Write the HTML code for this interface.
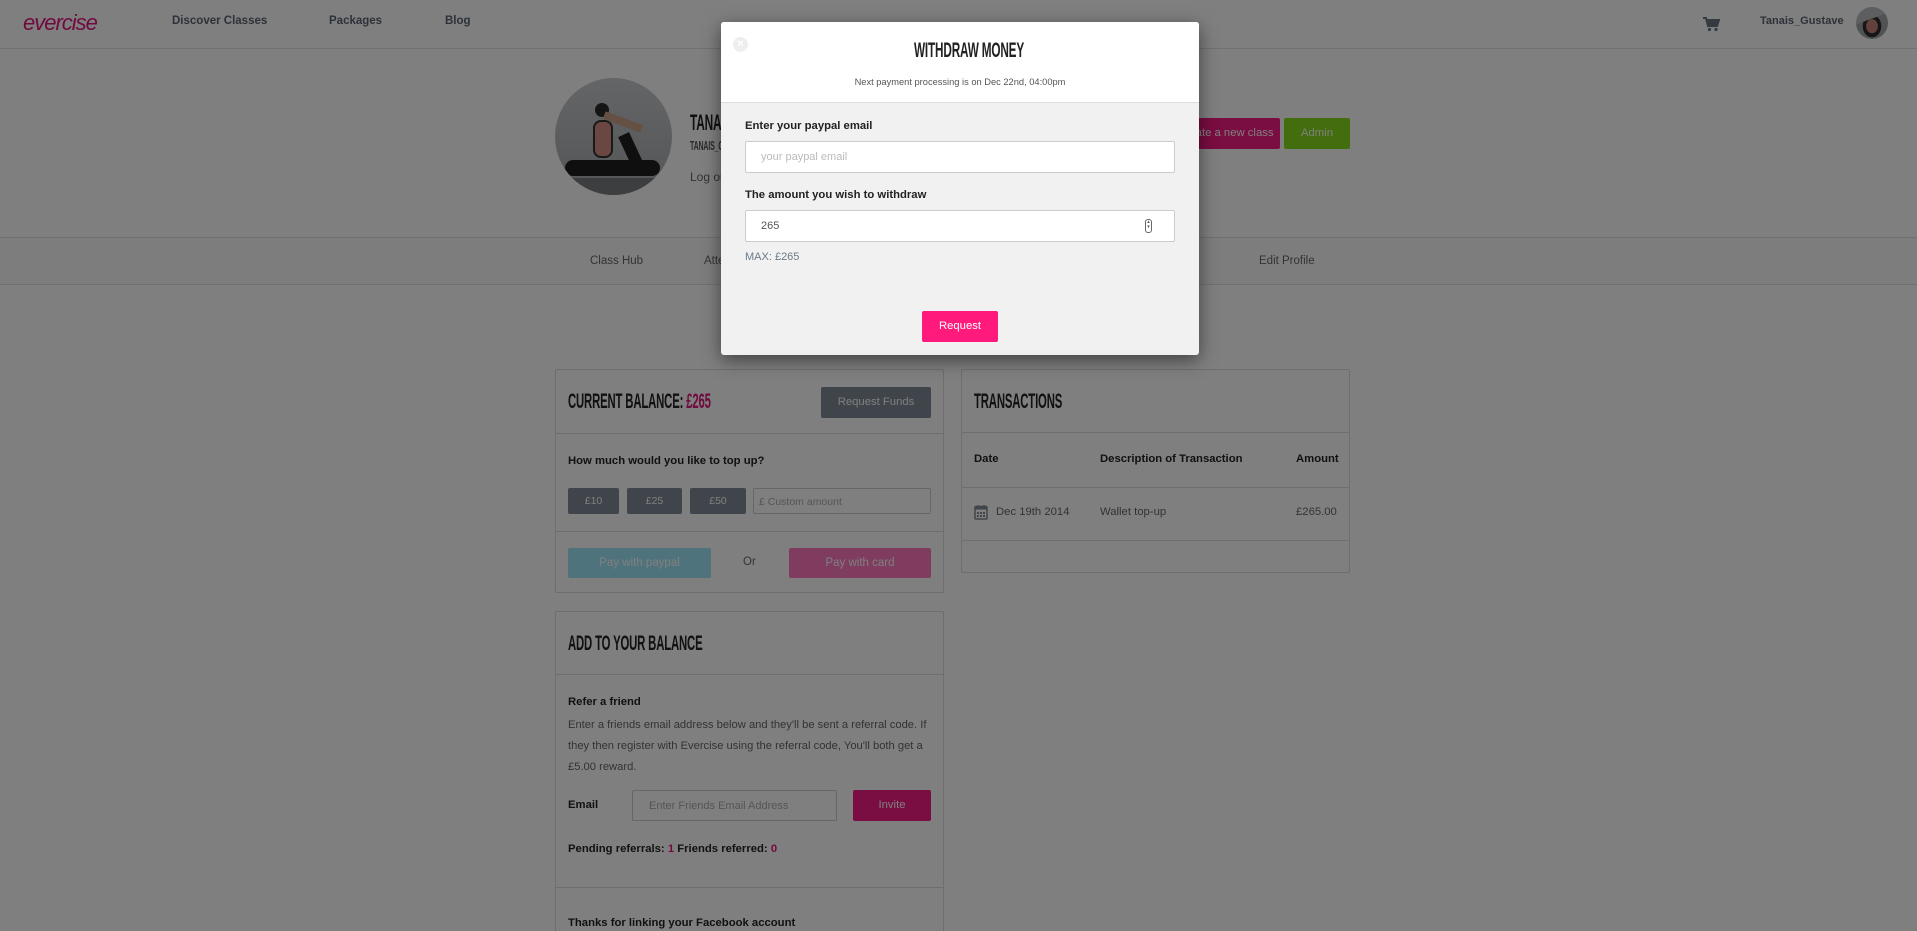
<!DOCTYPE html>
<html><head><meta charset="utf-8"><style>
*{box-sizing:border-box;margin:0;padding:0}
html,body{width:1917px;height:931px;overflow:hidden}
body{background:#fff;font-family:"Liberation Sans",sans-serif;color:#333;position:relative;font-size:11.3px}
.a{position:absolute;white-space:nowrap}
.cond{font-weight:bold;transform:scaleX(.54);transform-origin:0 50%;letter-spacing:-.3px;color:#222}
.panel{position:absolute;background:#fff;border:1px solid #ddd;border-radius:2px;overflow:hidden}
.hr{position:absolute;left:0;right:0;height:1px;background:#ddd}
.btn{position:absolute;color:#fff;text-align:center;border-radius:2px;font-size:11.3px}
.dark{background:#7f8a95}
.lbl{font-weight:bold;font-size:11.3px;color:#222}
.grey{color:#666}
#ov{position:absolute;left:0;top:0;width:1917px;height:931px;background:rgba(0,0,0,.5)}
</style></head><body>
<!-- header -->
<div class="a" style="left:23px;top:10px;font-size:22px;font-style:italic;color:#e0157f;letter-spacing:-1px">evercise</div>
<div class="a lbl" style="left:172px;top:15px;color:#5a6470;font-size:11.5px">Discover Classes</div>
<div class="a lbl" style="left:329px;top:15px;color:#5a6470;font-size:11.5px">Packages</div>
<div class="a lbl" style="left:445px;top:15px;color:#5a6470;font-size:11.5px">Blog</div>
<svg class="a" style="left:1703px;top:17px" width="18" height="15" viewBox="0 0 18 15"><path d="M0 1h3l2 8h9l2-6H4" fill="none" stroke="#68747f" stroke-width="2"/><rect x="5" y="4" width="10" height="5" fill="#68747f"/><circle cx="6.5" cy="12.5" r="1.6" fill="#68747f"/><circle cx="13" cy="12.5" r="1.6" fill="#68747f"/></svg>
<div class="a lbl" style="left:1760px;top:15px;color:#5a6470;font-size:11px">Tanais_Gustave</div>
<div class="a" style="left:1856px;top:7px;width:32px;height:32px;border-radius:50%;background:linear-gradient(160deg,#b8bcc0 0 40%,transparent 40%),radial-gradient(ellipse at 50% 60%,#c98377 0 25%,#2c2c2c 27% 40%,#a0a5a9 42%)"></div>
<div class="hr" style="top:48px;background:#e3e3e3"></div>
<!-- profile -->
<div class="a" style="left:555px;top:78px;width:117px;height:117px;border-radius:50%;overflow:hidden;background:linear-gradient(#c8cbce,#a6abaf)">
 <div class="a" style="left:40px;top:25px;width:14px;height:14px;border-radius:50%;background:#2a2a2a"></div>
 <div class="a" style="left:38px;top:42px;width:20px;height:38px;border-radius:8px;background:#d48e83;border:2px solid #333"></div>
 <div class="a" style="left:48px;top:40px;width:40px;height:8px;background:#caa088;transform:rotate(20deg)"></div>
 <div class="a" style="left:10px;top:82px;width:95px;height:16px;border-radius:8px;background:#1e1e1e"></div>
 <div class="a" style="left:70px;top:55px;width:12px;height:35px;background:#1e1e1e;transform:rotate(-25deg)"></div>
 <div class="a" style="left:0;top:100px;width:117px;height:17px;background:#7a7d80"></div>
</div>
<div class="a cond" style="left:690px;top:110px;font-size:22px">TANAIS</div>
<div class="a cond" style="left:690px;top:138px;font-size:13px;color:#555">TANAIS_GUSTAVE</div>
<div class="a grey" style="left:690px;top:170px;font-size:12px">Log out</div>
<div class="btn" style="left:1171px;top:118px;width:109px;height:31px;line-height:31px;background:#f51a82">Create a new class</div>
<div class="btn" style="left:1284px;top:118px;width:66px;height:31px;line-height:31px;background:#86dc1c">Admin</div>
<div class="a" style="left:0;top:237px;width:1917px;height:48px;background:#fbfbfb;border-top:1px solid #e0e0e0;border-bottom:1px solid #e0e0e0"></div>
<div class="a grey" style="left:590px;top:255px;font-size:11.5px">Class Hub</div>
<div class="a grey" style="left:704px;top:255px;font-size:11.5px">Attendees</div>
<div class="a grey" style="left:1259px;top:255px;font-size:11.5px">Edit Profile</div>
<!-- left panel -->
<div class="panel" style="left:555px;top:369px;width:389px;height:224px">
 <div class="a cond" style="left:12px;top:20px;font-size:21px">CURRENT BALANCE: <span style="color:#e0157f">£265</span></div>
 <div class="btn dark" style="left:265px;top:17px;width:110px;height:31px;line-height:31px">Request Funds</div>
 <div class="hr" style="top:63px"></div>
 <div class="a lbl" style="left:12px;top:85px">How much would you like to top up?</div>
 <div class="btn dark" style="left:12px;top:118px;width:51px;height:26px;line-height:26px;font-size:10.5px">£10</div>
 <div class="btn dark" style="left:71px;top:118px;width:55px;height:26px;line-height:26px;font-size:10.5px">£25</div>
 <div class="btn dark" style="left:134px;top:118px;width:56px;height:26px;line-height:26px;font-size:10.5px">£50</div>
 <div class="a" style="left:197px;top:118px;width:178px;height:26px;border:1px solid #ccc;border-radius:2px;color:#aaa;font-size:10.5px;padding:7px 5px">£ Custom amount</div>
 <div class="hr" style="top:161px"></div>
 <div class="btn" style="left:12px;top:178px;width:143px;height:30px;line-height:30px;background:#9ee6f8;font-size:11.5px">Pay with paypal</div>
 <div class="a grey" style="left:187px;top:186px;font-size:11.5px">Or</div>
 <div class="btn" style="left:233px;top:178px;width:142px;height:30px;line-height:30px;background:#ff79bd;font-size:11.5px">Pay with card</div>
</div>
<div class="panel" style="left:555px;top:611px;width:389px;height:330px">
 <div class="a cond" style="left:12px;top:20px;font-size:21px">ADD TO YOUR BALANCE</div>
 <div class="hr" style="top:62px"></div>
 <div class="a lbl" style="left:12px;top:84px">Refer a friend</div>
 <div class="a grey" style="left:12px;top:103px;font-size:11.2px;line-height:21px;white-space:normal;width:375px">Enter a friends email address below and they'll be sent a referral code. If they then register with Evercise using the referral code, You'll both get a £5.00 reward.</div>
 <div class="a lbl" style="left:12px;top:187px">Email</div>
 <div class="a" style="left:76px;top:178px;width:205px;height:31px;border:1px solid #ccc;border-radius:2px;color:#aaa;font-size:11px;padding:9px 16px">Enter Friends Email Address</div>
 <div class="btn" style="left:297px;top:178px;width:78px;height:31px;line-height:31px;background:#f51a82">Invite</div>
 <div class="a lbl" style="left:12px;top:231px">Pending referrals: <span style="color:#e0157f">1</span> Friends referred: <span style="color:#e0157f">0</span></div>
 <div class="hr" style="top:275px"></div>
 <div class="a lbl" style="left:12px;top:305px">Thanks for linking your Facebook account</div>
</div>
<!-- right panel -->
<div class="panel" style="left:961px;top:369px;width:389px;height:204px">
 <div class="a cond" style="left:12px;top:20px;font-size:21px">TRANSACTIONS</div>
 <div class="hr" style="top:62px"></div>
 <div class="a lbl" style="left:12px;top:83px">Date</div>
 <div class="a lbl" style="left:138px;top:83px">Description of Transaction</div>
 <div class="a lbl" style="left:334px;top:83px">Amount</div>
 <div class="hr" style="top:117px"></div>
 <svg class="a" style="left:12px;top:134px" width="14" height="16" viewBox="0 0 14 16"><rect x="1" y="2.5" width="12" height="12.5" rx="1" fill="none" stroke="#7f8a95" stroke-width="1.5"/><rect x="1" y="2.5" width="12" height="3" fill="#7f8a95"/><path d="M4 1v3M10 1v3" stroke="#7f8a95" stroke-width="1.5"/><g fill="#7f8a95"><rect x="3" y="8" width="2" height="2"/><rect x="6" y="8" width="2" height="2"/><rect x="9" y="8" width="2" height="2"/><rect x="3" y="11" width="2" height="2"/><rect x="6" y="11" width="2" height="2"/><rect x="9" y="11" width="2" height="2"/></g></svg>
 <div class="a grey" style="left:34px;top:136px">Dec 19th 2014</div>
 <div class="a grey" style="left:138px;top:136px">Wallet top-up</div>
 <div class="a grey" style="left:334px;top:136px">£265.00</div>
 <div class="hr" style="top:170px"></div>
</div>
<div id="ov"></div>
<!-- modal -->
<div class="a" style="left:721px;top:22px;width:478px;height:333px;background:#f1f1f1;border-radius:3px;box-shadow:0 5px 18px rgba(0,0,0,.5);overflow:hidden">
 <div class="a" style="left:0;top:0;width:478px;height:81px;background:#fff;border-bottom:1px solid #ddd"></div>
 <div class="a" style="left:12px;top:15px;width:15px;height:15px;border-radius:50%;background:#eee;color:#fff;font-size:11px;line-height:15px;text-align:center;font-weight:bold">×</div>
 <div class="a cond" style="left:193px;top:17px;font-size:21px;transform:scaleX(.56)">WITHDRAW MONEY</div>
 <div class="a" style="left:0;width:478px;top:55px;text-align:center;font-size:9.3px;color:#555">Next payment processing is on Dec 22nd, 04:00pm</div>
 <div class="a lbl" style="left:24px;top:98px">Enter your paypal email</div>
 <div class="a" style="left:24px;top:119px;width:430px;height:32px;background:#fff;border:1px solid #ccc;border-radius:2px;color:#bbb;font-size:11px;padding:9px 15px">your paypal email</div>
 <div class="a lbl" style="left:24px;top:167px">The amount you wish to withdraw</div>
 <div class="a" style="left:24px;top:188px;width:430px;height:32px;background:#fff;border:1px solid #ccc;border-radius:2px;color:#555;font-size:11px;padding:9px 15px">265</div>
 <div class="a" style="left:424px;top:197px;width:7px;height:14px;border:1px solid #666;border-radius:3px;font-size:5px;line-height:5px;text-align:center;color:#555">▴<br>▾</div>
 <div class="a" style="left:24px;top:229px;font-size:11px;color:#6a7a88">MAX: £265</div>
 <div class="btn" style="left:201px;top:289px;width:76px;height:31px;line-height:31px;background:#ff1a7b;font-size:11.3px">Request</div>
</div>
</body></html>
